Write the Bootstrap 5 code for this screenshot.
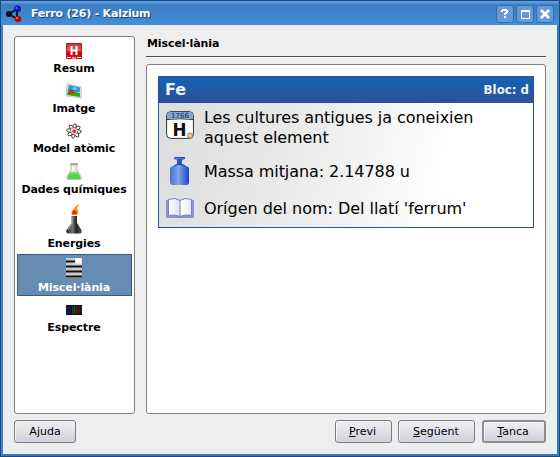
<!DOCTYPE html>
<html lang="ca">
<head>
<meta charset="utf-8">
<title>Ferro (26) - Kalzium</title>
<link href="https://cdn.jsdelivr.net/npm/bootstrap@5.3.0/dist/css/bootstrap.min.css" rel="stylesheet">
<style>
body{font-family:"DejaVu Sans",sans-serif;font-size:11px;line-height:14px;color:#000;background:#1c477c;overflow:hidden}
svg{display:block;flex:none}
.win{width:560px;height:457px;border:solid #3079c7;border-width:1px 3px 3px;border-left-color:#3c83cf;background:#eee;position:relative}
.win::after{content:"";position:absolute;inset:-1px -3px -3px;border:1px solid #1f4a7d;pointer-events:none}
.titlebar{height:24px;padding:1px 5px 0 4px;margin:0 -2px;background:linear-gradient(#5a9ade 0,#5a9ade 2px,#3c7fc6 3px,#3c7fc4 7px,#428fdd 24px);color:#fff}
.wtitle{font-size:11px;font-weight:700;letter-spacing:-.21px;text-shadow:1px 1px 1px #1b3e70}
.wbtns{gap:2px}
.wbtn{width:18px;height:18px;border:1px solid #3a6ca8;border-radius:3px;background:#639bda}
.content{padding:11px 11px 0;gap:11px}
.pane{background:#fff;border:1px solid #7f7f7f;border-radius:3px}
.side{width:121px;height:378px;padding-top:2px}
.entry{width:115px;height:40px;padding-top:4px;margin:0 auto;font-weight:700;white-space:nowrap;letter-spacing:-.1px}
.entry svg{margin-right:1px}
.entry span{margin-top:3px;margin-right:1px}
.entry.t41{height:41px}
.entry.t54{height:54px}
.entry.sel{height:42px;padding-top:3px;background:#668cb3;border:1px solid #3d5a7c;color:#fff}
.entry.last{padding-top:9px}.entry.last span{margin-top:6px}
.heading{height:21px;padding:1px 0 0 1px;border-bottom:1px solid #4c4c4c;box-shadow:0 1px #fff;font-weight:700;letter-spacing:-.1px}
.mainpane{height:350px;margin-top:7px;padding:11px}
.info{height:152px;border:1px solid #2c509a;background:linear-gradient(102deg,#dcdcdc 0,#efefef 48%,#fff 75%)}
.infohead{height:26px;padding:0 4px 0 6px;background:linear-gradient(#1463b2,#2f4f99);color:#eef3fb;font-weight:700}
.infohead .sym{font-size:16px}
.infohead .blk{font-size:11.8px}
.fact{font-size:16px;line-height:20px;padding-left:7px;gap:10px;white-space:nowrap;letter-spacing:-.07px}
.f1{padding-top:5px}.f1 svg{margin-top:3px}
.f2{margin-top:6px;height:36px}.f2 svg{margin:0 0 3px}
.f3{margin-top:2px;height:34px;letter-spacing:-.03px}.f3 svg{margin-bottom:3px}
.year{font-size:7px;letter-spacing:0}
.bigh{font-size:17px;font-weight:700;letter-spacing:0}
.actions{padding:6px 11px 0;gap:6px}
.kbtn{height:23px;padding:0;border:1px solid #7c7d82;border-radius:3px;background:linear-gradient(#eeeef1,#e4e4e9 40%,#cfd0d9);font-size:11px;line-height:14px;color:#000;box-shadow:inset 1px 1px #f5f5f7}
.kbtn u{text-underline-offset:1px}
.kbtn.dflt{border:2px solid #8d8f94;margin-left:1px}
.b1{width:62px}.b2{width:57px;padding-right:2px}.b3{width:77px;padding-right:1px}.b4{width:64px;padding-right:2px}
</style>
</head>
<body>
<div class="win">
 <div class="titlebar d-flex align-items-center">
  <svg width="18" height="18" viewBox="0 0 18 18"><path d="M4 9 12 4V14Z" fill="none" stroke="#111" stroke-width="2"/><circle cx="4" cy="9" r="3" fill="#111"/><circle cx="12.500" cy="4" r="3.400" fill="#1717a5"/><circle cx="11.500" cy="3" r="1.100" fill="#6970e8"/><circle cx="13" cy="14" r="3.300" fill="#b70808"/><circle cx="12" cy="13" r="1.100" fill="#ff6969"/></svg>
  <span class="wtitle ms-1 ps-1 me-auto">Ferro (26) - Kalzium</span>
  <div class="d-flex wbtns">
   <span class="wbtn"><svg width="16" height="16" viewBox="0 0 16 16"><path d="M4 6V4H5V3H10V4H11V7H10V8H9V9H7V7H8V6H9V5H6V6Z M7 10H9V12H7Z" fill="#fff"/></svg></span>
   <span class="wbtn"><svg width="16" height="16" viewBox="0 0 16 16"><path d="M4.500 5H12.500V12.500H4.500Z" fill="none" stroke="#fff"/><path d="M4 5H13" stroke="#fff" stroke-width="2"/></svg></span>
   <span class="wbtn"><svg width="16" height="16" viewBox="0 0 16 16"><path d="M4 4 12 12M12 4 4 12" stroke="#fff" stroke-width="2.600"/></svg></span>
  </div>
 </div>
 <div class="d-flex content">
  <nav class="pane side">
   <div class="entry d-flex flex-column align-items-center"><svg width="16" height="16"><defs><linearGradient id="rd" x2="0" y2="1"><stop stop-color="#c93434"/><stop offset=".5" stop-color="#dd6464"/><stop offset=".55" stop-color="#cc0808"/><stop offset="1" stop-color="#e21111"/></linearGradient></defs><path d="M.5.5H15.500V15.500H.5Z" fill="url(#rd)" stroke="#b81515"/><path d="M5.500 3V12M10.500 3V12M5.500 7.500H10.500" stroke="#fff" stroke-width="2"/><path d="M1 14.500H5M6 15H10M11 14.500H15" stroke="#fff"/></svg><span>Resum</span></div>
   <div class="entry d-flex flex-column align-items-center"><svg width="16" height="16"><path d="M1 1 15 4 15.500 15 0 13Z" fill="#e4e4de" stroke="#aaa" stroke-width=".6"/><path d="M3 2 14 4.500V9L1.500 8.500Z" fill="#2495e5"/><path d="M5 5 9 4 12 6 8 7Z" fill="#75c6f4"/><path d="M1.500 9 6 8 14 10V14L1 12Z" fill="#36a51e"/><circle cx="5.500" cy="9" r="2.700" fill="#a64c11"/></svg><span>Imatge</span></div>
   <div class="entry d-flex flex-column align-items-center"><svg width="16" height="16"><g fill="#fff" fill-opacity=".5" stroke="#222" stroke-width=".8"><ellipse cx="8" cy="8" rx="2.300" ry="7.400" transform="rotate(8 8 8)"/><ellipse cx="8" cy="8" rx="2.300" ry="7.400" transform="rotate(53 8 8)"/><ellipse cx="8" cy="8" rx="2.300" ry="7.400" transform="rotate(98 8 8)"/><ellipse cx="8" cy="8" rx="2.300" ry="7.400" transform="rotate(143 8 8)"/></g><circle cx="8" cy="8" r="3" fill="#fbd0d4"/><circle cx="8.200" cy="8.200" r="1.700" fill="#ee2222"/><path d="M9 1H10.500V2.500H9ZM14 7H15.500V8.500H14ZM3 4H4.500V5.500H3Z" fill="#d02bd0"/></svg><span>Model atòmic</span></div>
   <div class="entry t41 d-flex flex-column align-items-center"><svg width="16" height="17"><path d="M5 2V7L.8 14Q0 16.500 2 16.500H14Q16 16.500 15.200 14L11 7V2Z" fill="#e1e9e1" stroke="#a3aaa3" stroke-width=".7"/><path d="M4 9H12L14.700 15 14 16H2L1.300 15Z" fill="#4cd846"/><path d="M4 10H12" stroke="#a2f49b"/><path d="M4 1H12" stroke="#8e968e" stroke-width="1.500"/><path d="M7 3V8" stroke="#fff" stroke-width="1.500"/></svg><span>Dades químiques</span></div>
   <div class="entry t54 d-flex flex-column align-items-center"><svg width="16" height="30"><defs><linearGradient id="bk"><stop stop-color="#222"/><stop offset=".4" stop-color="#777"/><stop offset=".65" stop-color="#252525"/><stop offset="1" stop-color="#555"/></linearGradient></defs><path d="M5.500 12H11V19L15.500 26Q16.500 29.500 13 29.500H3Q-.5 29.500.5 26L5.500 19Z" fill="url(#bk)"/><path d="M6 11Q4 7 8 5 9 1 14 .3 10 3 12 6 13 9 11 11Z" fill="#ff9d13"/><path d="M6 10Q6 7 8.500 6 11 7 11 10Z" fill="#ee1c10"/><path d="M2 26 6 19V13" stroke="#aaa" fill="none"/></svg><span>Energies</span></div>
   <div class="entry sel d-flex flex-column align-items-center"><svg width="16" height="20"><path fill="#ccc" d="M0 0H16V20H0Z"/><path d="M0 3.500H9M0 8.500H16M0 13.500H16M0 18.500H16" stroke="#111" stroke-width="2"/><path fill="#fff" d="M9.500 0H15.500V5.500H9.500Z"/></svg><span>Miscel·lània</span></div>
   <div class="entry last d-flex flex-column align-items-center"><svg width="16" height="10"><path fill="#111" d="M0 0H16V10H0Z"/><path d="M2.500 1V9" stroke="#15156e" stroke-width="3"/><path d="M6.500 1V9" stroke="#17433c"/><path d="M8.500 1V9" stroke="#275a12" stroke-width="1.500"/><path d="M11 1V9" stroke="#4d470d"/><path d="M13.500 1V9" stroke="#641010" stroke-width="2"/></svg><span>Espectre</span></div>
  </nav>
  <main class="flex-grow-1">
   <div class="heading">Miscel·lània</div>
   <div class="pane mainpane">
    <div class="info">
     <div class="infohead d-flex align-items-center justify-content-between"><span class="sym">Fe</span><span class="blk">Bloc: d</span></div>
     <div class="fact f1 d-flex"><svg width="28" height="28" viewBox="0 0 28 28"><rect x=".6" y=".6" width="26.800" height="26.800" rx="4" fill="#fff" stroke="#333"/><path d="M1 8V4Q1 1 5 1H23Q27 1 27 4V8Q14 6 1 8Z" fill="#7fa5dc"/><path d="M1 8.500Q14 7 27 8.500" fill="none" stroke="#333"/><text class="year" x="14" y="7" text-anchor="middle" fill="#152a50">1766</text><text class="bigh" x="13.500" y="24.500" text-anchor="middle" textLength="14" lengthAdjust="spacingAndGlyphs" fill="#111">H</text><circle cx="24" cy="24.500" r="2.700" fill="#f1bd83" stroke="#666" stroke-width=".6"/></svg><span>Les cultures antigues ja coneixien<br>aquest element</span></div>
     <div class="fact f2 d-flex align-items-center"><svg width="28" height="28" viewBox="0 0 28 28"><defs><linearGradient id="bl"><stop stop-color="#4274d6"/><stop offset=".45" stop-color="#86a4df"/><stop offset="1" stop-color="#1645cc"/></linearGradient></defs><path d="M8 0H19V2L16 3.500V7L20 9Q23 9.500 23 12V25Q23 28 20 28H7Q4 28 4 25V12Q4 9.500 7 9L11 7V3.500L8 2Z" fill="url(#bl)"/><path d="M8.500.7H18.500M8 9.300 11.500 7.300H15.500L19 9.300" stroke="#1747bc" stroke-width="1.300" fill="none"/><path d="M11 2H16V7H11Z" fill="#2456cf"/></svg><span>Massa mitjana: 2.14788 u</span></div>
     <div class="fact f3 d-flex align-items-center"><svg width="28" height="20" viewBox="0 0 28 20"><defs><linearGradient id="pg"><stop stop-color="#fff"/><stop offset=".4" stop-color="#e4e6f6"/><stop offset=".55" stop-color="#fff"/><stop offset="1" stop-color="#e9eaf9"/></linearGradient></defs><path d="M0 2H28V20H0Z" fill="#8b92d8"/><path d="M2.500 1.500Q9-1 14 2.500 19-1 25.500 1.500V17.500Q19 16 14 18.500 9 16 2.500 17.500Z" fill="url(#pg)" stroke="#777ec3"/><path d="M14 2.500V18" stroke="#8d93ca" stroke-width="1.300"/></svg><span>Orígen del nom: Del llatí 'ferrum'</span></div>
    </div>
   </div>
  </main>
 </div>
 <div class="d-flex actions">
  <button class="btn kbtn me-auto b1">A<u>j</u>uda</button>
  <button class="btn kbtn b2"><u>P</u>revi</button>
  <button class="btn kbtn b3"><u>S</u>egüent</button>
  <button class="btn kbtn dflt b4"><u>T</u>anca</button>
 </div>
</div>
<script src="https://cdn.jsdelivr.net/npm/bootstrap@5.3.0/dist/js/bootstrap.bundle.min.js"></script>
</body>
</html>
